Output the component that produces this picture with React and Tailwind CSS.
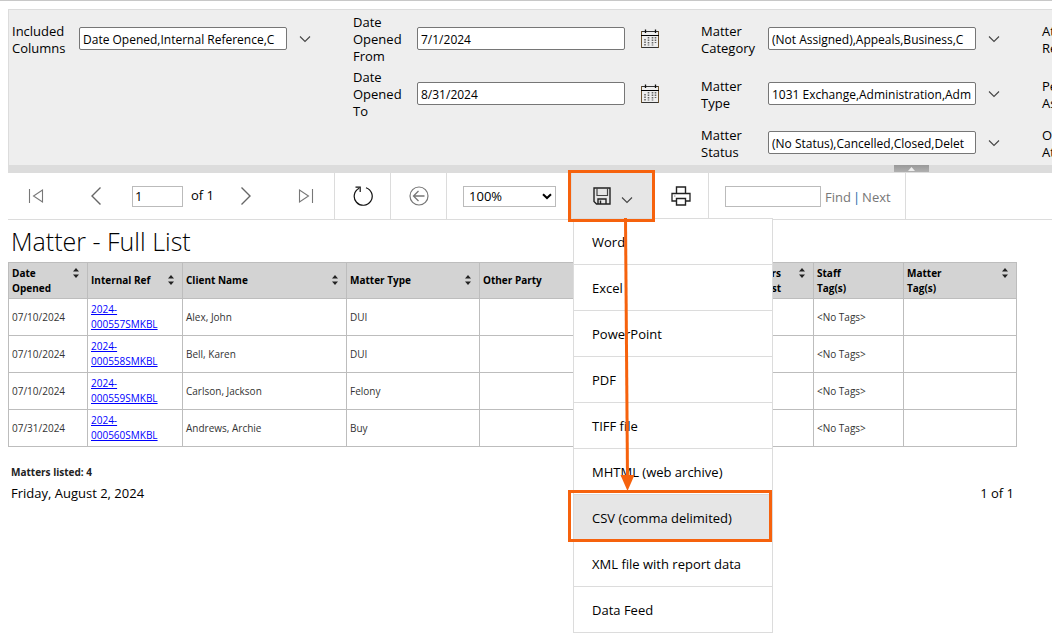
import { useState } from 'react';

const PARAM_GROUPS = [
  {
    id: 'columns',
    kind: 'list',
    fields: [
      { label: 'Included Columns', value: 'Date Opened,Internal Reference,C' },
    ],
  },
  {
    id: 'dates',
    kind: 'date',
    fields: [
      { label: 'Date Opened From', value: '7/1/2024' },
      { label: 'Date Opened To', value: '8/31/2024' },
    ],
  },
  {
    id: 'matter',
    kind: 'list',
    fields: [
      { label: 'Matter Category', value: '(Not Assigned),Appeals,Business,C' },
      { label: 'Matter Type', value: '1031 Exchange,Administration,Adm' },
      { label: 'Matter Status', value: '(No Status),Cancelled,Closed,Delet' },
    ],
  },
  {
    id: 'staff',
    kind: 'list',
    fields: [
      { label: 'Attorney Responsible', value: '' },
      { label: 'Person Assisting', value: '' },
      { label: 'Originating Attorney', value: '' },
    ],
  },
];

const COLUMNS = [
  { lines: ['Date', 'Opened'], width: 'w-[79px]', sort: true },
  { lines: ['Internal Ref'], width: 'w-[95px]', sort: true },
  { lines: ['Client Name'], width: 'w-[164px]', sort: true },
  { lines: ['Matter Type'], width: 'w-[133px]', sort: true },
  { lines: ['Other Party'], width: '', sort: false },
  { lines: ['Hours', 'Cost'], width: 'w-[82px]', sort: true, end: true },
  { lines: ['Staff', 'Tag(s)'], width: 'w-[90px]', sort: false },
  { lines: ['Matter', 'Tag(s)'], width: 'w-[113px]', sort: true },
];

const MATTERS = [
  { date: '07/10/2024', ref: '000557SMKBL', client: 'Alex, John', type: 'DUI' },
  { date: '07/10/2024', ref: '000558SMKBL', client: 'Bell, Karen', type: 'DUI' },
  {
    date: '07/10/2024',
    ref: '000559SMKBL',
    client: 'Carlson, Jackson',
    type: 'Felony',
  },
  {
    date: '07/31/2024',
    ref: '000560SMKBL',
    client: 'Andrews, Archie',
    type: 'Buy',
  },
];

const EXPORT_FORMATS = [
  'Word',
  'Excel',
  'PowerPoint',
  'PDF',
  'TIFF file',
  'MHTML (web archive)',
  'CSV (comma delimited)',
  'XML file with report data',
  'Data Feed',
];

function Icon({ w = 20, h = 20, className = '', children }) {
  return (
    <svg
      width={w}
      height={h}
      viewBox={`0 0 ${w} ${h}`}
      fill="none"
      stroke="currentColor"
      className={className}
      aria-hidden="true"
    >
      {children}
    </svg>
  );
}

function ChevronDown({ className }) {
  return (
    <Icon w={12} h={8} className={className}>
      <path d="M1 1.5 6 6.5 11 1.5" strokeWidth="1.1" />
    </Icon>
  );
}

function CalendarIcon() {
  return (
    <Icon w={20} h={20}>
      <path d="M1 2.5H19M1 18.5H19" stroke="#333" />
      <path d="M1.5 2V19M18.5 2V19" stroke="#6b5230" />
      <path d="M1 6.5H19" stroke="#000" />
      <path d="M5.5 0.5V4M15.5 0.5V4" stroke="#111" strokeWidth="1.3" />
      <path
        d="M8.5 8V16.5M12.5 8V16.5M15.5 8V14M5 10V16.5"
        stroke="#666"
        strokeWidth="1.6"
        strokeDasharray="1.6 0.9"
      />
    </Icon>
  );
}

function ParamField({ id, kind, label, value }) {
  const [text, setText] = useState(value);
  return (
    <>
      <label htmlFor={id} className="pt-[2px] pr-1 text-[13px] leading-[17px]">
        {label}
      </label>
      <input
        id={id}
        value={text}
        onChange={(e) => setText(e.target.value)}
        className="h-[23px] w-full rounded-xs border border-[#767676] bg-white pt-px pl-[3px] text-[12px]"
      />
      <button
        type="button"
        aria-label={`Choose ${label}`}
        className={`flex justify-start ${
          kind === 'date' ? 'pl-[15px]' : 'pl-3'
        }`}
      >
        {kind === 'date' ? (
          <CalendarIcon />
        ) : (
          <ChevronDown className="text-[#444]" />
        )}
      </button>
    </>
  );
}

function ParameterPanel() {
  return (
    <div className="flex overflow-hidden border-t border-l border-[#dcdcdc] bg-[#eee] py-px pl-[3px]">
      {PARAM_GROUPS.map((group) => (
        <div
          key={group.id}
          className={`mr-7 grid shrink-0 grid-rows-[55px_55px_43px] items-center ${
            group.kind === 'date'
              ? 'grid-cols-[64px_208px_48px]'
              : 'grid-cols-[67px_208px_38px]'
          }`}
        >
          {group.fields.map((f, i) => (
            <ParamField
              key={f.label}
              id={`${group.id}-${i}`}
              kind={group.kind}
              label={f.label}
              value={f.value}
            />
          ))}
        </div>
      ))}
    </div>
  );
}

function Splitter() {
  return (
    <div className="flex h-2 bg-[#dcdcdc] pr-[123px]">
      <button
        type="button"
        aria-label="Hide parameters"
        className="ml-auto flex h-[7px] w-[35px] items-center justify-center bg-linear-to-b from-[#999] to-[#b0b0b0]"
      >
        <svg width="7" height="4" viewBox="0 0 7 4" fill="#eee" aria-hidden="true">
          <path d="M0 4 3.5 0 7 4Z" />
        </svg>
      </button>
    </div>
  );
}

function ToolButton({ label, className = '', children }) {
  return (
    <button
      type="button"
      aria-label={label}
      className={`flex h-full items-center justify-center ${className}`}
    >
      {children}
    </button>
  );
}

function ExportMenu() {
  const [selected, setSelected] = useState('CSV (comma delimited)');
  return (
    <div className="relative h-full border-l border-[#dcdcdc]">
      <button
        type="button"
        aria-label="Export"
        className="flex h-full w-[82px] items-center justify-center gap-[10px] bg-[#e6e6e6] text-[#222]"
      >
        <Icon w={18} h={18}>
          <path d="M1 1H17V17H3.5L1 14.5Z" strokeWidth="1.4" />
          <path d="M4 1V8.5H14.5V1" stroke="#444" strokeWidth="1.2" />
          <path d="M5 17V12H13V17M7.5 13.5V17" strokeWidth="1.4" />
        </Icon>
        <ChevronDown className="mt-2 text-[#444]" />
      </button>
      <ul className="absolute top-[45px] left-px z-10 w-[200px] border border-[#dcdcdc] bg-white text-[13px]">
        {EXPORT_FORMATS.map((name) => (
          <li key={name} className="border-b border-[#dcdcdc] last:border-b-0">
            <button
              type="button"
              onClick={() => setSelected(name)}
              className={`block h-[45px] w-full pt-[2px] pl-[18px] text-left ${
                name === selected ? 'bg-[#e6e6e6]' : ''
              }`}
            >
              {name}
            </button>
          </li>
        ))}
      </ul>
      <svg
        width="206"
        height="374"
        viewBox="0 0 206 374"
        fill="none"
        stroke="#f6620d"
        strokeWidth="3"
        className="pointer-events-none absolute -top-[3px] -left-1 z-20"
        aria-hidden="true"
      >
        <path d="M1.5 1.5H85.5V50.5H1.5Z" />
        <path d="M1.5 321.5H202.5V370.5H1.5Z" />
        <path d="M57.5 48 59.5 308" />
        <path d="M52.5 305H66.5L59.5 321Z" fill="#f6620d" stroke="none" />
      </svg>
    </div>
  );
}

function Toolbar() {
  const [page, setPage] = useState('1');
  const [zoom, setZoom] = useState('100%');
  const [term, setTerm] = useState('');

  return (
    <div className="flex h-[47px] items-center border-b border-[#dcdcdc] text-[13px]">
      <div className="flex h-full items-center border-r border-[#dcdcdc] px-2">
        <ToolButton label="First page" className="w-10 text-[#777]">
          <Icon w={16} h={16}>
            <path d="M1.5 1V15M14.5 2V14L5.5 8Z" strokeWidth="1.1" />
          </Icon>
        </ToolButton>
        <ToolButton label="Previous page" className="ml-5 w-10 text-[#666]">
          <Icon w={12} h={20}>
            <path d="M10.5 1.5 2 10 10.5 18.5" strokeWidth="1.4" />
          </Icon>
        </ToolButton>
        <input
          aria-label="Page"
          value={page}
          onChange={(e) => setPage(e.target.value)}
          className="ml-4 h-[21px] w-[51px] border border-[#bbb] px-[2px]"
        />
        <span className="ml-2">of 1</span>
        <ToolButton label="Next page" className="ml-3 w-10 text-[#666]">
          <Icon w={12} h={20}>
            <path d="M1.5 1.5 10 10 1.5 18.5" strokeWidth="1.4" />
          </Icon>
        </ToolButton>
        <ToolButton label="Last page" className="ml-5 w-10 text-[#777]">
          <Icon w={16} h={16}>
            <path d="M14.5 1V15M1.5 2V14L10.5 8Z" strokeWidth="1.1" />
          </Icon>
        </ToolButton>
      </div>
      <ToolButton
        label="Refresh"
        className="w-14 border-r border-[#dcdcdc] text-[#111]"
      >
        <Icon w={20} h={20}>
          <path d="M6.2 2.2A9 9 0 1 0 13 1.7" strokeWidth="1.2" />
          <path d="M2.5 1.2H7.2V6" strokeWidth="1.2" />
        </Icon>
      </ToolButton>
      <ToolButton
        label="Back"
        className="w-14 border-r border-[#dcdcdc] text-[#777]"
      >
        <Icon>
          <circle cx="10" cy="10" r="9" strokeWidth="1.2" />
          <path d="M15.5 10H4.5M9.5 5 4.5 10 9.5 15" strokeWidth="1.3" />
        </Icon>
      </ToolButton>
      <div className="relative mr-[15px] ml-4">
        <select
          aria-label="Zoom"
          value={zoom}
          onChange={(e) => setZoom(e.target.value)}
          className="block h-[21px] w-[93px] appearance-none border border-[#bbb] bg-white pl-[5px]"
        >
          <option>100%</option>
          <option>150%</option>
          <option>200%</option>
        </select>
        <Icon
          w={10}
          h={7}
          className="pointer-events-none absolute top-[7px] right-1"
        >
          <path d="M1 1.2 5 5 9 1.2" strokeWidth="2" />
        </Icon>
      </div>
      <ExportMenu />
      <ToolButton
        label="Print"
        className="w-[55px] border-r border-[#dcdcdc] text-[#222]"
      >
        <Icon w={20} h={20}>
          <path d="M5.5 7V1H14.5V7" strokeWidth="1.4" />
          <path d="M5.5 15H1V7.5H19V15H14.5" strokeWidth="1.3" />
          <path d="M5.5 12.5H14.5V19H5.5Z" strokeWidth="1.4" />
          <path d="M3 10H4.5" stroke="#888" />
        </Icon>
      </ToolButton>
      <div className="flex h-full items-center border-r border-[#dcdcdc] pr-[14px] pl-4 text-[#777]">
        <input
          aria-label="Find text"
          value={term}
          onChange={(e) => setTerm(e.target.value)}
          className="mr-1 h-[21px] w-24 border border-[#bbb] px-[2px]"
        />
        <div className="pt-[3px]">
          <button type="button">Find</button>
          <span className="mx-[2px] text-[#1b66a8]">|</span>
          <button type="button">Next</button>
        </div>
      </div>
    </div>
  );
}

function SortArrows() {
  return (
    <svg width="6" height="10" viewBox="0 0 6 10" fill="#222" aria-hidden="true">
      <path d="M0 3.5 3 0 6 3.5ZM0 6.5H6L3 10Z" />
    </svg>
  );
}

function MatterTable() {
  const cell = 'border border-[#bdbdbd] p-[3px]';
  return (
    <table className="w-full table-fixed border-collapse text-[10px] leading-[15px] text-[#333]">
      <colgroup>
        {COLUMNS.map((c) => (
          <col key={c.lines.join(' ')} className={c.width} />
        ))}
      </colgroup>
      <thead>
        <tr className="bg-[#d3d3d3] text-black">
          {COLUMNS.map((c) => (
            <th
              key={c.lines.join(' ')}
              scope="col"
              className="h-9 border border-[#bdbdbd] px-[3px] py-0 text-left font-bold"
            >
              <div className="flex items-start">
                <span className={c.end ? 'w-[46px] text-right' : 'flex-1'}>
                  {c.lines.map((line) => (
                    <span key={line} className="block">
                      {line}
                    </span>
                  ))}
                </span>
                {c.sort && (
                  <button
                    type="button"
                    aria-label={`Sort by ${c.lines.join(' ')}`}
                    className="mt-[2px] mr-[5px] ml-auto"
                  >
                    <SortArrows />
                  </button>
                )}
              </div>
            </th>
          ))}
        </tr>
      </thead>
      <tbody>
        {MATTERS.map((m) => (
          <tr key={m.ref}>
            <td className={cell}>{m.date}</td>
            <td className={cell}>
              <a href={`#${m.ref}`} className="text-[#00f] underline">
                2024-
                <br />
                {m.ref}
              </a>
            </td>
            <td className={cell}>{m.client}</td>
            <td className={cell}>{m.type}</td>
            <td className={cell} />
            <td className={cell} />
            <td className={cell}>&lt;No Tags&gt;</td>
            <td className={cell} />
          </tr>
        ))}
      </tbody>
    </table>
  );
}

export default function App() {
  return (
    <div className="min-h-screen overflow-x-hidden border-t border-[#c8c8c8] bg-white pt-2 pl-2 font-['Open_Sans',sans-serif] text-black">
      <ParameterPanel />
      <Splitter />
      <Toolbar />
      <main className="mr-[35px]">
        <h1 className="py-[3px] pl-[3px] text-[25px] leading-9 font-light">
          Matter - Full List
        </h1>
        <MatterTable />
        <p className="mt-[18px] pl-[3px] text-[10px] leading-[15px] font-bold text-[#222]">
          Matters listed: {MATTERS.length}
        </p>
        <div className="mt-[3px] flex justify-between px-[3px] text-[13px] leading-5">
          <span>Friday, August 2, 2024</span>
          <span>1 of 1</span>
        </div>
      </main>
    </div>
  );
}
